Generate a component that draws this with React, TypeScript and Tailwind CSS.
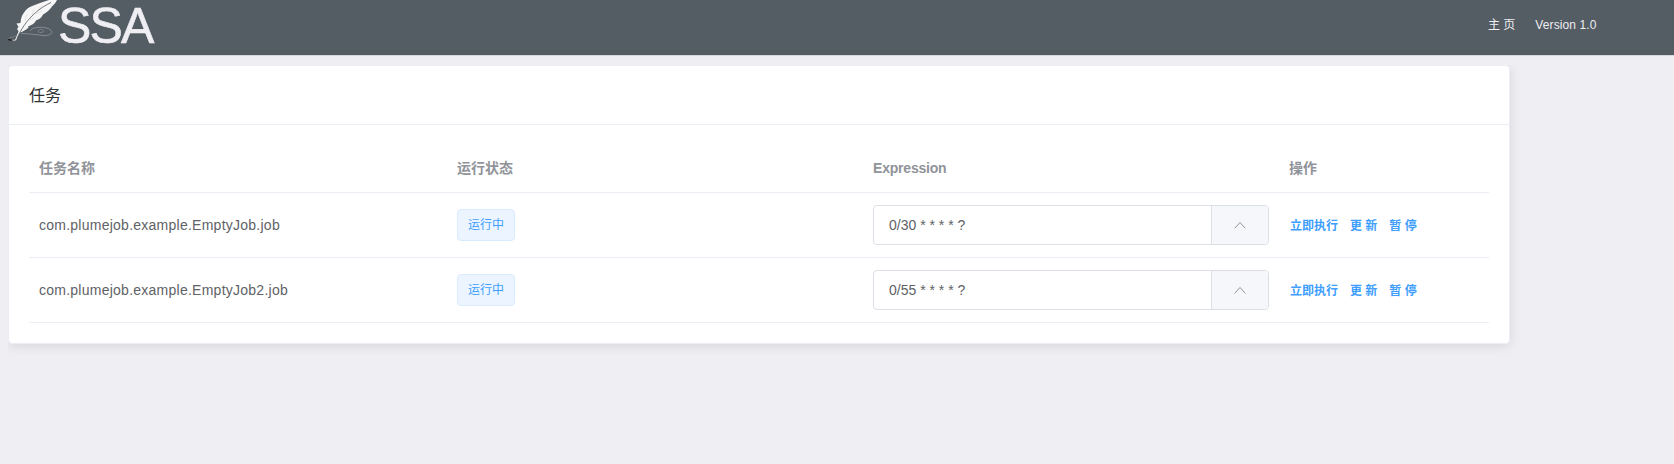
import React from 'react';

type Job = { name: string; status: string; expression: string };

const jobs: Job[] = [
  { name: 'com.plumejob.example.EmptyJob.job', status: '运行中', expression: '0/30 * * * * ?' },
  { name: 'com.plumejob.example.EmptyJob2.job', status: '运行中', expression: '0/55 * * * * ?' },
];

const actions = ['立即执行', '更 新', '暂 停'];

function Feather() {
  return (
    <svg className="h-[44px] w-[52px] shrink-0" viewBox="8 0 52 44" fill="none">
      <path d="M30 31C31 27.500 41 26 48 28.500C55 31.500 52 36 43 35.500C38 35 33 34 21 33.500" stroke="#92979c" strokeWidth=".8" />
      <path d="M42 29.500C38 28.800 36 32.500 41 32.500C44 32.300 45 30.500 42 29.500" stroke="#92979c" strokeWidth=".6" />
      <path d="M8 38.5L16 36" stroke="#85898e" strokeWidth=".7" />
      <path d="M8 39.8L15.500 40.300L18 34" stroke="#c2c4c6" strokeWidth="1" />
      <path d="M8 38.700L12.500 39.500L12 41L8 40.500Z" fill="#1d2023" />
      <path d="M57 0H49C46 1 43 2 40 3C35 5 29 6.500 26 10C22.500 14 21 17 20.500 23L16.500 23.500L18.500 27L17 29L18.500 31L17 36L20 32.500C23 31.500 26 30 28.500 27.500L28 26.500C32 25 35 23 36 20.500C40 19 42 17 43 14.500C48 12 50 9 52 6.500C54 4.500 55.500 3 57 0Z" fill="#f6f6f6" />
      <path d="M51 2.500C42 7 37 11 32 16C26 22 22 28 17 38" stroke="#666a6f" strokeWidth=".9" />
      <path d="M18 34L15.500 40" stroke="#f0f0f0" strokeWidth=".8" />
      <path d="M25 21L27 14M32 15L34 9M39 9L42 5M29 20L34 18M36 14L42 11" stroke="#d5d6d7" strokeWidth=".6" />
    </svg>
  );
}

function ChevronUp() {
  return (
    <svg className="h-[8px] w-[12px]" viewBox="0 0 12 8" fill="none">
      <path d="M1 7L6 1.5L11 7" stroke="#909399" strokeWidth="1" strokeLinecap="round" strokeLinejoin="round" />
    </svg>
  );
}

export default function App() {
  return (
    <div className="min-h-[464px] w-full bg-[#eeeef3] font-['Liberation_Sans','Noto_Sans_CJK_SC',sans-serif] text-[14px] text-[#606266]">
      <header className="flex h-[56px] items-start justify-between border-b border-[#d5d7dc] bg-[#545c64] text-[#eeeef3]">
        <div className="flex items-start pl-[8px]">
          <Feather />
          <span className="ml-[-2px] text-[50px] leading-[52px] tracking-[-1.8px] [-webkit-text-stroke:0.6px_#eeeef3]">SSA</span>
        </div>
        <nav className="flex w-[186px] gap-[20px] pt-[16px] text-[12px] leading-[18px]">
          <span>主 页</span>
          <span className="tracking-[0.1px]">Version 1.0</span>
        </nav>
      </header>
      <div className="mt-[9px] ml-[8px] w-[1527px] overflow-hidden pb-5">
        <section className="h-[279px] w-[1502px] rounded-[4px] border border-[#ebeef5] bg-white shadow-[0_2px_12px_0_rgba(0,0,0,0.1)]">
          <h1 className="h-[59px] border-b border-[#ebeef5] pl-[20px] text-[16px] leading-[59px] text-[#303133]">任务</h1>
          <div className="px-[20px] pt-[20px]">
            <div className="grid h-[48px] grid-cols-[418px_416px_416px_1fr] items-center border-b border-[#ebeef5] pl-[10px] font-bold text-[#909399]">
              <span>任务名称</span>
              <span>运行状态</span>
              <span className="tracking-[-0.2px]">Expression</span>
              <span>操作</span>
            </div>
            {jobs.map((job) => (
              <div key={job.name} className="grid h-[65px] grid-cols-[418px_416px_416px_1fr] items-center border-b border-[#ebeef5] pl-[10px]">
                <span className="tracking-[0.25px]">{job.name}</span>
                <span className="flex h-[32px] w-[58px] items-center justify-center rounded-[4px] border border-[#d9ecff] bg-[#ecf5ff] text-[12px] text-[#409eff]">{job.status}</span>
                <div className="flex h-[40px] w-[396px] overflow-hidden rounded-[4px] border border-[#dcdfe6]">
                  <span className="flex flex-1 items-center pl-[15px]">{job.expression}</span>
                  <button className="flex w-[57px] items-center justify-center border-l border-[#dcdfe6] bg-[#f5f7fa]">
                    <ChevronUp />
                  </button>
                </div>
                <div className="flex gap-[12px] pl-px pt-px text-[12px] font-bold text-[#409eff]">
                  {actions.map((label) => (
                    <button key={label}>{label}</button>
                  ))}
                </div>
              </div>
            ))}
          </div>
        </section>
      </div>
    </div>
  );
}
